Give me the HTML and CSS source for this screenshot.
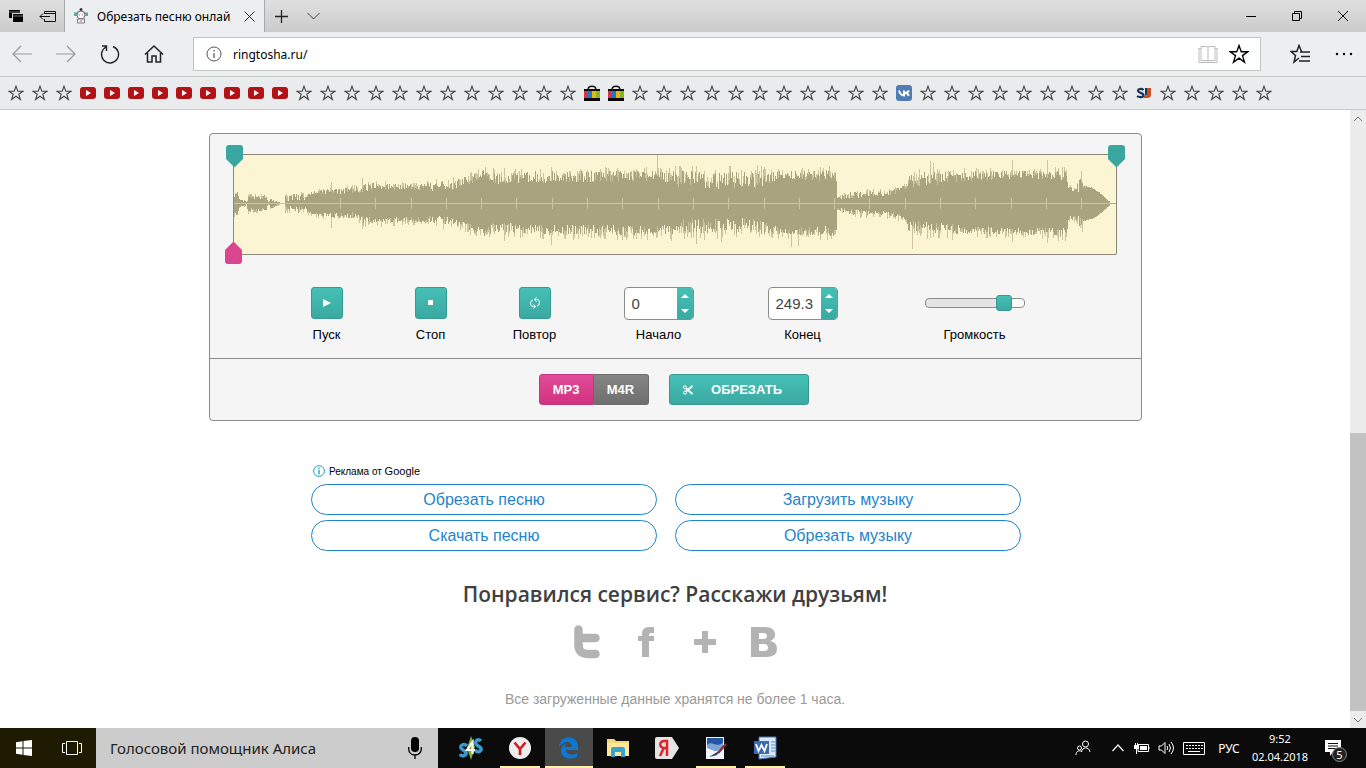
FILE: index.html
```html
<!DOCTYPE html>
<html lang="ru">
<head>
    <meta charset="UTF-8">
    <meta name="viewport" content="width=device-width, initial-scale=1.0">
    <title>Обрезать песню онлайн</title>
    <link rel="stylesheet" href="styles.css">
</head>
<body>
<svg class="symbols" aria-hidden="true">
    <symbol id="star" viewBox="0 0 16 16">
        <path d="M8 1.2L9.8 6.2H15L10.8 9.3L12.4 14.5L8 11.3L3.6 14.5L5.2 9.3L1 6.2H6.2Z" fill="none" stroke="currentColor" stroke-width="1.1"/>
    </symbol>
    <symbol id="video" viewBox="0 0 16 16">
        <rect y="2" width="16" height="12" rx="3" fill="#b31217"/>
        <path d="M6 5L11 8L6 11Z" fill="#fff"/>
    </symbol>
    <symbol id="bag" viewBox="0 0 16 16">
        <path d="M4 5C4 0 12 0 12 5" fill="none" stroke="#111" stroke-width="1.4"/>
        <path d="M0 4H16V16H0Z" fill="#080808"/>
        <path d="M0 6H4V13H0Z" fill="#d8334a"/>
        <path d="M4 6H8V13H4Z" fill="#2276c9"/>
        <path d="M8 6H12V13H8Z" fill="#e6b70e"/>
        <path d="M12 6H16V13H12Z" fill="#86b52b"/>
    </symbol>
    <symbol id="vk" viewBox="0 0 16 16">
        <rect width="16" height="16" rx="3" fill="#4f7db3"/>
        <path d="M3 5.500C4 9 5.500 10.500 8 10.500V5.500M13 5.500C12 7.500 10.500 8 8.500 8C10.500 8 12 9 13 10.700" fill="none" stroke="#fff" stroke-width="1.900"/>
    </symbol>
    <symbol id="sj" viewBox="0 0 16 16">
        <path d="M7.500 5C6 3.500 2 3.500 2 5.800C2 8 7.500 7.800 7.500 10.200C7.500 12.500 3 12.500 1 11.200" fill="none" stroke="#16365f" stroke-width="2.200"/>
        <path d="M9 3H15V10Q15 13 11 13H8V10.500H10Q11 10.500 11 9V5H9Z" fill="#c8501e"/>
        <path d="M9 3H11V9Q11 10.500 9 10.500Z" fill="#16365f"/>
    </symbol>
</svg>

<header class="browser">
    <div class="tabs">
        <button class="tab-tool" aria-label="Отложенные вкладки">
            <svg width="16" height="16" viewBox="0 0 16 16"><path d="M1 2H12V5H4V10H1Z"/><path d="M5 6H15V14H5Z"/><path d="M1 4H12M5 8H15" stroke="#c4c6c8" stroke-width=".6"/></svg>
        </button>
        <button class="tab-tool" aria-label="Отложить вкладки">
            <svg width="18" height="14" viewBox="0 0 18 14"><path d="M5.500 5V2.500H16.500V12.500H5.500V10M5 4.500H16M1 7.500H11M4 4.500L1 7.500L4 10.500" fill="none" stroke="#111"/></svg>
        </button>
        <div class="tab">
            <svg width="16" height="16" viewBox="0 0 16 16"><circle cx="8" cy="1.500" r="1.500" fill="#333"/><path d="M3 7C3 1.500 13 1.500 13 7Z" fill="#3e4a4c"/><circle cx="8" cy="7" r="4" fill="#fff" stroke="#667"/><path d="M1 4.500H4V8H1ZM12 4.500H15V8H12Z" fill="#56aaa4"/><path d="M4.500 11H11.500V15H4.500Z" fill="#fff" stroke="#777"/><path d="M6 7H7M9 7H10M6.500 13H9.500" stroke="#c55"/></svg>
            <span class="tab-title">Обрезать песню онлай</span>
            <button class="tab-close" aria-label="Закрыть вкладку">
                <svg width="11" height="11" viewBox="0 0 11 11"><path d="M.5.5L10.500 10.500M10.500.5L.5 10.500" stroke="#333"/></svg>
            </button>
        </div>
        <button class="tab-tool" aria-label="Новая вкладка">
            <svg width="13" height="13" viewBox="0 0 13 13"><path d="M6.500 0V13M0 6.500H13" stroke="#222" stroke-width="1.300"/></svg>
        </button>
        <button class="tab-tool" aria-label="Список вкладок">
            <svg width="13" height="8" viewBox="0 0 13 8"><path d="M.5 1L6.500 7L12.500 1" fill="none" stroke="#444"/></svg>
        </button>
        <div class="window-buttons">
            <button aria-label="Свернуть"><svg width="10" height="10" viewBox="0 0 10 10"><path d="M0 5.500H10" stroke="#000"/></svg></button>
            <button aria-label="Развернуть"><svg width="10" height="10" viewBox="0 0 10 10"><path d="M.5 2.500H7.500V9.500H.5ZM2.500 2.500V.5H9.500V7.500H7.500" fill="none" stroke="#000"/></svg></button>
            <button aria-label="Закрыть"><svg width="10" height="10" viewBox="0 0 10 10"><path d="M0 0L10 10M10 0L0 10" stroke="#000"/></svg></button>
        </div>
    </div>
    <div class="toolbar">
        <button class="nav disabled" aria-label="Назад"><svg width="20" height="18" viewBox="0 0 20 18"><path d="M9 1L1 9L9 17M1 9H20" fill="none" stroke="currentColor" stroke-width="1.200"/></svg></button>
        <button class="nav disabled" aria-label="Вперёд"><svg width="20" height="18" viewBox="0 0 20 18"><path d="M11 1L19 9L11 17M19 9H0" fill="none" stroke="currentColor" stroke-width="1.200"/></svg></button>
        <button class="nav" aria-label="Обновить"><svg width="20" height="20" viewBox="0 0 20 20"><path d="M6 3A8.500 8.500 0 1 0 13 2.500M6.500 7V2H2" fill="none" stroke="currentColor" stroke-width="1.400"/></svg></button>
        <button class="nav" aria-label="Домой"><svg width="20" height="20" viewBox="0 0 20 20"><path d="M1 10.500L10 2L19 10.500M3.500 9V18H8V12H12V18H16.500V9" fill="none" stroke="currentColor" stroke-width="1.500"/></svg></button>
        <div class="address">
            <svg width="16" height="16" viewBox="0 0 16 16"><circle cx="8" cy="8" r="7" fill="none" stroke="#555"/><path d="M8 7V12M8 4V5.500" stroke="#333"/></svg>
            <input type="text" value="ringtosha.ru/" aria-label="Адрес">
            <button class="icon-button" aria-label="Режим чтения"><svg width="20" height="18" viewBox="0 0 20 18"><path d="M10 2.500Q10 1.500 8 1.500H3V15.500H8Q10 15.500 10 16.500Q10 15.500 12 15.500H17V1.500H12Q10 1.500 10 2.500V16M3 3.500H1V17.500H19V3.500H17" fill="none" stroke="#bbb"/></svg></button>
            <button class="icon-button" aria-label="В избранное"><svg class="big-star"><use href="#star"/></svg></button>
        </div>
        <button class="nav hub" aria-label="Центр"><svg width="20" height="20" viewBox="0 0 20 20"><path d="M11.500 7.500L9 1.500L6.800 7.500H1L5.500 11.500L4 18L9 14M10 8H20M11 12.500H20M9 17H20" fill="none" stroke="currentColor" stroke-width="1.500"/></svg></button>
        <button class="nav" aria-label="Дополнительно"><svg width="18" height="4" viewBox="0 0 18 4"><circle cx="2" cy="2" r="1.200"/><circle cx="9" cy="2" r="1.200"/><circle cx="16" cy="2" r="1.200"/></svg></button>
    </div>
    <nav class="favorites" id="favorites" aria-label="Избранное"></nav>
</header>

<div class="viewport">
    <main class="page">
        <section class="editor">
            <div class="editor-top">
                <div class="wave">
                    <svg class="wave-image" id="wave" viewBox="0 0 882 99" preserveAspectRatio="none">
                        <path id="peaks" class="peaks"/>
                        <path id="body" class="body"/>
                        <path d="M0 48.500H882" class="axis-dark"/>
                        <path id="axis" class="axis"/>
                    </svg>
                    <svg class="marker marker-start" viewBox="0 0 17 22"><path d="M3 0H14Q17 0 17 3V14L9 22H8L0 14V3Q0 0 3 0Z" fill="#3aa6a0"/></svg>
                    <svg class="marker marker-end" viewBox="0 0 17 22"><path d="M3 0H14Q17 0 17 3V14L9 22H8L0 14V3Q0 0 3 0Z" fill="#3aa6a0"/></svg>
                    <svg class="marker marker-play" viewBox="0 0 17 22"><path d="M3 22H14Q17 22 17 19V8L9 0H8L0 8V19Q0 22 3 22Z" fill="#d9468f"/></svg>
                </div>
                <div class="controls">
                    <div class="control">
                        <button class="square" id="play" aria-labelledby="play-label"><svg width="8" height="8" viewBox="0 0 8 8"><path d="M0 0L8 4L0 8Z" fill="#fff"/></svg></button>
                        <label id="play-label" for="play">Пуск</label>
                    </div>
                    <div class="control">
                        <button class="square" id="stop" aria-labelledby="stop-label"><svg width="6" height="6" viewBox="0 0 6 6"><path d="M0 0H5V5H0Z" fill="#fff"/></svg></button>
                        <label id="stop-label" for="stop">Стоп</label>
                    </div>
                    <div class="control">
                        <button class="square" id="repeat" aria-labelledby="repeat-label"><svg width="10" height="12" viewBox="0 0 10 12"><path d="M5 9.500H3Q.7 9.500.7 7.500V5.500Q.7 3.500 3 3M5 2.500H7Q9.300 2.500 9.300 4.500V6.500Q9.300 8.500 7 9M6.500.3L4.500 2.500L6.500 4.700M3.500 7.300L5.500 9.500L3.500 11.700" fill="none" stroke="#fff"/></svg></button>
                        <label id="repeat-label" for="repeat">Повтор</label>
                    </div>
                    <div class="control control-number">
                        <div class="spinner">
                            <input type="text" id="start" value="0">
                            <div class="arrows">
                                <button aria-label="Начало больше"><svg width="8" height="4" viewBox="0 0 8 4"><path d="M0 4L4 0L8 4Z" fill="#fff"/></svg></button>
                                <button aria-label="Начало меньше"><svg width="8" height="4" viewBox="0 0 8 4"><path d="M0 0L4 4L8 0Z" fill="#fff"/></svg></button>
                            </div>
                        </div>
                        <label for="start">Начало</label>
                    </div>
                    <div class="control control-number">
                        <div class="spinner">
                            <input type="text" id="end" value="249.3">
                            <div class="arrows">
                                <button aria-label="Конец больше"><svg width="8" height="4" viewBox="0 0 8 4"><path d="M0 4L4 0L8 4Z" fill="#fff"/></svg></button>
                                <button aria-label="Конец меньше"><svg width="8" height="4" viewBox="0 0 8 4"><path d="M0 0L4 4L8 0Z" fill="#fff"/></svg></button>
                            </div>
                        </div>
                        <label for="end">Конец</label>
                    </div>
                    <div class="control control-volume">
                        <input type="range" id="volume" min="0" max="100" value="86">
                        <label for="volume">Громкость</label>
                    </div>
                </div>
            </div>
            <div class="editor-bottom">
                <div class="formats">
                    <button class="format active">MP3</button>
                    <button class="format">M4R</button>
                </div>
                <button class="cut">
                    <svg width="10" height="10" viewBox="0 0 10 10"><path d="M3 3.500L9.500 9M3 6.500L9.500 1" stroke="#fff" stroke-width="1.800"/><circle cx="2" cy="2.300" r="1.500" fill="none" stroke="#fff"/><circle cx="2" cy="7.700" r="1.500" fill="none" stroke="#fff"/></svg>
                    <span>ОБРЕЗАТЬ</span>
                </button>
            </div>
        </section>

        <section class="ads">
            <div class="ads-title">
                <svg width="12" height="12" viewBox="0 0 12 12"><circle cx="6" cy="6" r="5.400" fill="none" stroke="#21a5c4"/><path d="M6 5V9.500M6 2.500V4" stroke="#21a5c4" stroke-width="1.400"/></svg>
                <span>Реклама от <b>Google</b></span>
            </div>
            <div class="ads-links">
                <a href="#">Обрезать песню</a>
                <a href="#">Загрузить музыку</a>
                <a href="#">Скачать песню</a>
                <a href="#">Обрезать музыку</a>
            </div>
        </section>

        <h2>Понравился сервис? Расскажи друзьям!</h2>
        <div class="social">
            <a href="#" aria-label="Twitter"><svg width="26" height="34" viewBox="0 0 26 34"><path d="M4.500 4.500V20Q4.500 29 14 29H21.500M4.500 13H21.500" fill="none" stroke="#b3b3b3" stroke-width="8.500" stroke-linecap="round"/></svg></a>
            <a href="#" aria-label="Facebook"><svg width="18" height="32" viewBox="0 0 18 32"><path d="M17 1V7H14Q12 7 12 10H17V15H12V31H5V15H1V10H5V8Q5 1 12 1Z" fill="#b3b3b3"/></svg></a>
            <a href="#" aria-label="Google Plus"><svg width="22" height="22" viewBox="0 0 22 22"><path d="M8 0H14V8H22V14H14V22H8V14H0V8H8Z" fill="#b3b3b3"/></svg></a>
            <a href="#" aria-label="ВКонтакте"><svg width="26" height="30" viewBox="0 0 26 30"><path fill-rule="evenodd" d="M0 0H14Q24 0 24 8Q24 12 19 14Q26 15 26 22Q26 30 15 30H0ZM8 6V12H12Q16 12 16 9Q16 6 12 6ZM8 17V24H13Q17 24 17 21Q17 17 13 17Z" fill="#b3b3b3"/></svg></a>
        </div>
        <p class="note">Все загруженные данные хранятся не более 1 часа.</p>
    </main>
    <div class="scrollbar">
        <svg width="16" height="17" viewBox="0 0 16 17"><path d="M4 11L8 7L12 11" fill="none" stroke="#777"/></svg>
        <div class="scroll-space"></div>
        <div class="scroll-thumb"></div>
        <svg width="16" height="17" viewBox="0 0 16 17"><path d="M4 7L8 11L12 7" fill="none" stroke="#777"/></svg>
    </div>
</div>

<footer class="taskbar">
    <div class="start">
        <button aria-label="Пуск Windows"><svg width="16" height="16" viewBox="0 0 16 16"><path d="M0 2.200L6.500 1.300V7.500H0ZM7.500 1.100L16 0V7.500H7.500ZM0 8.500H6.500V14.700L0 13.800ZM7.500 8.500H16V16L7.500 14.900Z" fill="#fff"/></svg></button>
        <button aria-label="Представление задач"><svg width="20" height="16" viewBox="0 0 20 16"><path d="M4.500 1.500H15.500V14.500H4.500ZM3 3.500H.5V12.500H3M17 3.500H19.500V12.500H17" fill="none" stroke="#fff"/></svg></button>
    </div>
    <div class="search">
        <input type="text" value="Голосовой помощник Алиса" aria-label="Поиск">
        <button aria-label="Микрофон"><svg width="14" height="22" viewBox="0 0 14 22"><rect x="3" width="8" height="15" rx="4"/><path d="M.7 10V12C.7 20 13.300 20 13.300 12V10M7 18V22" fill="none" stroke="#000" stroke-width="1.300"/></svg></button>
    </div>
    <div class="apps">
        <button aria-label="S4S"><svg width="24" height="24" viewBox="0 0 24 24"><path d="M12 0L16 11L12 24L8 12Z" fill="#76b53a"/><path d="M8 10C5 7 1 9 2 12C3 15 8 14 7 18C5 21 2 20 1 18M22 5C19 2 16 5 17 8C18 11 23 10 22 14C20 17 18 16 16 14" fill="none" stroke="#3c98cf" stroke-width="3.500"/><path d="M13.500 18V6L8 14H16" fill="none" stroke="#fff" stroke-width="2.200"/></svg></button>
        <button class="open" aria-label="Яндекс Браузер"><svg width="22" height="22" viewBox="0 0 22 22"><circle cx="11" cy="11" r="11" fill="#eee"/><path d="M5.500 5.500L11 12L16.500 5.500M11 11V18" fill="none" stroke="#d11b22" stroke-width="2.600"/></svg></button>
        <button class="open current" aria-label="Edge"><svg width="20" height="22" viewBox="0 0 20 22"><path d="M0 10C2-4 20-2 19 11V13H7C7 18 14 19 18 16V20C10 24 2 20 2 14C2 10 5 7 8 6C6 7 6 9 6 10H13C13 3 4 4 0 10Z" fill="#0c78d4"/></svg></button>
        <button aria-label="Проводник"><svg width="22" height="20" viewBox="0 0 22 20"><path d="M0 1H7L9 3H22V18H0Z" fill="#f3d77b"/><path d="M2 5H22V18H0V4Z" fill="#ffe79b"/><path d="M4 11Q4 9 6 9H16Q18 9 18 11V19H14V14H8V19H4Z" fill="#35a5cf"/></svg></button>
        <button aria-label="Яндекс"><svg width="24" height="24" viewBox="0 0 24 24"><path d="M2 1H17L24 12L17 23H2Q0 23 0 21V3Q0 1 2 1Z" fill="#e4e4e4"/><path d="M12 20V5H9.500C4 5 4 12 9 12H12M8.500 12.500L5 20" fill="none" stroke="#e2232a" stroke-width="2.500"/></svg></button>
        <button class="open" aria-label="Paint"><svg width="22" height="24" viewBox="0 0 22 24"><path d="M1 1H19V23H1Z" fill="#f2f5fa"/><path d="M2 2H18V13L10 15L2 11Z" fill="#2456a5"/><path d="M2 9C7 4 10 12 18 7V13L10 15L2 12Z" fill="#7ca5d8"/><path d="M21 8L13 17" stroke="#862b36" stroke-width="2.500"/><path d="M14 15L4 21L12 19Z" fill="#24355c"/></svg></button>
        <button class="open" aria-label="Word"><svg width="24" height="24" viewBox="0 0 24 24"><path d="M6 1H23V21L6 23Z" fill="#dce8f7" stroke="#4576b7"/><path d="M1 5H16V18H1Z" fill="#3b6cb2"/><path d="M3 8L5.500 15L8.500 9L11.500 15L14 8" fill="none" stroke="#fff" stroke-width="1.800"/><path d="M18 6H22M18 9H22M18 12H22M18 15H22M8 20H21" stroke="#5c8bc6"/></svg></button>
    </div>
    <div class="tray">
        <button aria-label="Люди"><svg width="16" height="16" viewBox="0 0 16 16"><circle cx="10.500" cy="4" r="3" fill="none" stroke="#fff"/><circle cx="4.500" cy="8" r="2" fill="none" stroke="#fff"/><path d="M1 15C1 11 4 10 6.500 11.500M6.500 12C7 7 14 6 15 12" fill="none" stroke="#fff"/></svg></button>
        <button aria-label="Скрытые значки"><svg width="12" height="8" viewBox="0 0 12 8"><path d="M.5 7L6 1L11.500 7" fill="none" stroke="#fff" stroke-width="1.200"/></svg></button>
        <button aria-label="Батарея"><svg width="16" height="14" viewBox="0 0 16 14"><path d="M4 3.500H14.500V10.500H4ZM15 6V8" fill="none" stroke="#fff"/><path d="M6 5H13V9H6ZM0 4H5V8H3V13H2V8H0ZM1 2H2V4H1ZM3 2H4V4H3Z" fill="#fff"/></svg></button>
        <button aria-label="Звук"><svg width="17" height="14" viewBox="0 0 17 14"><path d="M1 5H3.500L7 1.500V12.500L3.500 9H1ZM9 5Q10.500 7 9 9M11 3Q14 7 11 11M13 1Q18 7 13 13" fill="none" stroke="#fff"/></svg></button>
        <button class="keyboard" aria-label="Клавиатура"><svg width="22" height="13" viewBox="0 0 22 13"><path d="M.5.5H21.500V12.500H.5Z" fill="none" stroke="#fff"/><path d="M3 3.500H20M3 6.500H20" stroke="#fff" stroke-dasharray="2 1"/><path d="M5 9.500H17" stroke="#fff"/></svg></button>
        <button class="lang">РУС</button>
        <button class="clock"><time>9:52</time><span>02.04.2018</span></button>
        <button class="notices" aria-label="Уведомления"><svg width="16" height="16" viewBox="0 0 16 16"><path d="M0 0H16V12H8L5 16V12H0Z" fill="#fff"/><path d="M3 3.500H13M3 6H13M3 8.500H13" stroke="#111"/></svg><span class="badge">5</span></button>
    </div>
</footer>
<script src="script.js"></script>
</body>
</html>
```
FILE: styles.css
```css
* {
    box-sizing: border-box;
}

body {
    margin: 0;
    height: 100vh;
    display: flex;
    flex-direction: column;
    overflow: hidden;
    font-family: "Liberation Sans", Arial, sans-serif;
    font-size: 13px;
    background: #fff;
}

button {
    display: flex;
    align-items: center;
    justify-content: center;
    padding: 0;
    border: 0;
    background: none;
    font-family: inherit;
    color: inherit;
}

input {
    min-width: 0;
    padding: 0;
    border: 0;
    background: none;
    font-family: inherit;
}

svg {
    flex-shrink: 0;
}

.symbols {
    position: absolute;
    width: 0;
    height: 0;
}

/* browser */
.browser {
    font-family: "Noto Sans", sans-serif;
    background: #eceeef;
}

.tabs {
    display: flex;
    height: 32px;
    background: linear-gradient(#dfdfdf, #cbcbcb);
}

.tab-tool {
    width: 32px;
}

.tab {
    display: flex;
    align-items: center;
    width: 201px;
    padding: 0 7px 0 8px;
    gap: 8px;
    background: #eceeef;
    border: solid #a9a9a9;
    border-width: 0 1px;
}

.tab-title {
    flex: 1;
    font-size: 12px;
    white-space: nowrap;
    overflow: hidden;
}

.tab-close {
    width: 16px;
}

.window-buttons {
    display: flex;
    margin-left: auto;
}

.window-buttons button {
    width: 46px;
}

.toolbar {
    display: flex;
    align-items: center;
    height: 45px;
    border-bottom: 1px solid #c6cdc8;
}

.nav {
    width: 44px;
    height: 44px;
    color: #222;
}

.disabled {
    color: #999;
}

.address {
    flex: 1;
    display: flex;
    align-items: center;
    gap: 11px;
    height: 34px;
    margin: 0 17px;
    padding: 0 11px 0 12px;
    background: #fff;
    border: 1px solid #bfc5c2;
}

.address input {
    flex: 1;
    font-size: 12px;
}

.big-star {
    width: 20px;
    height: 20px;
}

.favorites {
    display: flex;
    align-items: center;
    gap: 8px;
    height: 33px;
    padding: 0 8px;
    background: #e9ebec;
    border-bottom: 1px solid #c6cdc8;
}

.favorites a {
    display: flex;
    color: #444;
}

.favorites svg {
    width: 16px;
    height: 16px;
}

/* page */
.viewport {
    flex: 1;
    display: flex;
    min-height: 0;
}

.page {
    flex: 1;
    display: flex;
    flex-direction: column;
    align-items: center;
    padding-top: 23px;
    overflow: hidden;
}

.editor {
    width: 100%;
    max-width: 933px;
    border: 1px solid #8c8c88;
    border-radius: 4px;
    background: #f5f5f5;
}

.editor-top {
    padding: 20px 24px 15px 23px;
    border-bottom: 1px solid #8c8c88;
}

.wave {
    position: relative;
    height: 101px;
    border: 1px solid #8c877a;
    border-radius: 2px;
    background: #fbf5d3;
}

.wave-image {
    display: block;
    width: 100%;
    height: 99px;
    shape-rendering: crispEdges;
}

.peaks {
    stroke: #cbc49c;
}

.body {
    stroke: #aaa37f;
}

.axis-dark {
    stroke: #b5ad82;
}

.axis {
    stroke: #cdc69b;
}

.marker {
    position: absolute;
    width: 17px;
    height: 22px;
}

.marker-start {
    top: -10px;
    left: -8px;
}

.marker-end {
    top: -10px;
    right: -9px;
}

.marker-play {
    bottom: -10px;
    left: -9px;
}

.controls {
    display: flex;
    justify-content: center;
    margin-top: 32px;
}

.control {
    display: flex;
    flex-direction: column;
    align-items: center;
    gap: 7px;
    width: 104px;
}

.control-number {
    width: 144px;
}

.control-volume {
    width: 200px;
}

.control label {
    line-height: 16px;
}

.square {
    width: 32px;
    height: 32px;
    margin-bottom: 1px;
    border: 1px solid #379a92;
    border-radius: 3px;
    background: linear-gradient(#46c0b6, #3aa9a2);
}

.spinner {
    display: flex;
    width: 70px;
    height: 33px;
    border: 1px solid #8c8c88;
    border-radius: 4px;
    background: #fff;
    overflow: hidden;
}

.spinner input {
    flex: 1;
    padding-left: 7px;
    font-size: 15px;
    color: #444;
}

.arrows {
    display: flex;
    flex-direction: column;
    width: 16px;
    background: linear-gradient(#46c0b6, #3aa9a2);
}

.arrows button {
    flex: 1;
}

#volume {
    appearance: none;
    width: 100px;
    height: 10px;
    margin: 11px 0 12px;
    border: 1px solid #8c8c88;
    border-radius: 4px;
    background: linear-gradient(90deg, #e4e4e4 80%, #fff 80%);
}

#volume::-webkit-slider-thumb {
    appearance: none;
    width: 16px;
    height: 16px;
    border: 1px solid #379a92;
    border-radius: 3px;
    background: linear-gradient(#46c0b6, #3aa9a2);
}

.editor-bottom {
    display: flex;
    justify-content: center;
    gap: 20px;
    padding: 15px 3px 15px 0;
}

.formats {
    display: flex;
}

.format {
    width: 55px;
    height: 31px;
    border: 1px solid #6c6c6c;
    border-left: 0;
    border-radius: 0 3px 3px 0;
    background: linear-gradient(#858585, #6f6f6f);
    font-size: 13px;
    font-weight: bold;
    color: #fff;
}

.format.active {
    border: 1px solid #c13a80;
    border-radius: 3px 0 0 3px;
    background: linear-gradient(#e04c98, #d23180);
}

.cut {
    width: 140px;
    height: 31px;
    padding-right: 12px;
    gap: 18px;
    border: 1px solid #379a92;
    border-radius: 3px;
    background: linear-gradient(#46c0b6, #3aa9a2);
    font-size: 13px;
    font-weight: bold;
    color: #fff;
}

.ads {
    width: 100%;
    max-width: 728px;
    margin-top: 42px;
}

.ads-title {
    display: flex;
    align-items: center;
    gap: 4px;
    height: 16px;
    margin-bottom: 5px;
    padding-left: 2px;
    font-size: 10px;
}

.ads-title b {
    font-size: 11px;
    font-weight: normal;
}

.ads-links {
    display: grid;
    grid-template-columns: 1fr 1fr;
    gap: 5px 18px;
    padding-right: 18px;
}

.ads-links a {
    height: 31px;
    border: 1px solid #1f84cc;
    border-radius: 16px;
    font-size: 16px;
    line-height: 29px;
    text-align: center;
    text-decoration: none;
    color: #1f84cc;
}

h2 {
    margin: 29px 0 0;
    font-family: "Open Sans", sans-serif;
    font-size: 21px;
    font-weight: 600;
    line-height: 28px;
    color: #404040;
}

.social {
    display: flex;
    align-items: center;
    height: 36px;
    margin-top: 16px;
}

.social a {
    display: flex;
    justify-content: center;
    width: 59px;
}

.note {
    margin: 30px 0 0;
    font-size: 14px;
    line-height: 18px;
    color: #999;
}

.scrollbar {
    display: flex;
    flex-direction: column;
    width: 16px;
    background: #ececec;
}

.scroll-space {
    flex: 306;
}

.scroll-thumb {
    flex: 278;
    background: #c2c2c2;
}

/* taskbar */
.taskbar {
    display: flex;
    height: 40px;
    background: #0b0b0b;
    font-family: "Noto Sans", sans-serif;
    color: #fff;
}

.start {
    display: flex;
    width: 96px;
    background: #1f1a02;
}

.start button {
    width: 48px;
}

.search {
    display: flex;
    width: 342px;
    padding: 0 16px 0 14px;
    background: #ccc;
}

.search input {
    flex: 1;
    font-size: 15px;
    color: #222;
}

.apps {
    display: flex;
    gap: 1px;
    padding-left: 9px;
}

.apps button {
    width: 48px;
    position: relative;
}

.apps .open::after {
    content: "";
    position: absolute;
    right: 4px;
    bottom: 0;
    left: 4px;
    height: 2px;
    background: #fff0a8;
}

.apps .current {
    background: #4a4a4a;
}

.apps .current::after {
    right: 0;
    left: 0;
}

.tray {
    display: flex;
    margin-left: auto;
    font-size: 11px;
}

.tray button {
    width: 24px;
}

.tray button:first-child {
    width: 47px;
}

.tray .keyboard {
    width: 32px;
}

.tray .lang {
    width: 38px;
    font-size: 12px;
}

.tray .clock {
    flex-direction: column;
    width: 64px;
    font-size: 11px;
    line-height: 18px;
}

.tray .notices {
    position: relative;
    width: 54px;
    padding-right: 12px;
}

.badge {
    position: absolute;
    top: 19px;
    left: 20px;
    width: 15px;
    height: 15px;
    border: 1px solid #888;
    border-radius: 50%;
    background: #222;
    font-size: 11px;
    line-height: 13px;
}
```
FILE: script.js
```js
// [icon, how many in a row]
const favorites = [
    ['star', 3], ['video', 9], ['star', 12], ['bag', 2], ['star', 11],
    ['vk', 1], ['star', 9], ['sj', 1], ['star', 5]
];

document.getElementById('favorites').innerHTML = favorites.map(([icon, count]) =>
    `<a href="#" aria-label="${icon}"><svg><use href="#${icon}"/></svg></a>`.repeat(count)
).join('');

// [x, body height, peak height]
const levels = [
    [0, 6, 14], [3, 10, 12], [5, 3, 5], [12, 0, 3], [14, 4, 10], [32, 4, 9], [34, 0, 1],
    [36, 2, 6], [44, 0, 2], [46, 0, 0], [50, 0, 0], [51, 1, 10], [65, 3, 13], [72, 2, 9], [77, 8, 14],
    [95, 9, 16], [120, 8, 19], [130, 11, 24], [160, 13, 22], [190, 13, 22],
    [205, 10, 25], [225, 15, 27], [238, 20, 33], [250, 26, 36], [260, 17, 35],
    [300, 20, 36], [400, 21, 37], [425, 22, 36], [450, 14, 38], [520, 14, 38],
    [550, 24, 35], [580, 22, 37], [602, 22, 38], [603, 4, 7], [615, 4, 14],
    [658, 8, 15], [672, 13, 20], [674, 16, 33], [700, 17, 37], [730, 22, 35],
    [790, 24, 35], [832, 23, 37], [835, 11, 18], [844, 11, 22], [845, 13, 33],
    [848, 13, 33], [849, 15, 18], [857, 15, 16], [865, 10, 11], [876, 0, 1], [882, 0, 0]
];

// single tall lines: x -> [up, down]
const spikes = {97: [21, 24], 128: [25, 25], 270: [35, 37], 317: [36, 41], 423: [48, 33],
    462: [37, 40], 557: [26, 43], 564: [26, 42], 678: [20, 45], 696: [42, 34], 699: [40, 33],
    778: [43, 38], 813: [43, 39]};

let seed = 11;
function random() {
    seed = (seed * 16807) % 2147483647;
    return seed / 2147483647;
}

function levelAt(x, k) {
    const i = levels.findIndex(level => level[0] > x);
    const a = levels[i - 1];
    const b = levels[i];
    return a[k] + (b[k] - a[k]) * (x - a[0]) / (b[0] - a[0]);
}

let body = '';
let peaks = '';
for (let x = 0; x < 882; x++) {
    const low = levelAt(x, 1);
    const high = levelAt(x, 2);
    if (high < 1) continue;
    const up = low + (high - low) * random() * 0.75;
    const down = low + (high - low) * random() * 0.65;
    body += `M${x + 0.5} ${Math.round(48 - up)}V${Math.round(49 + down)}`;
    const spike = spikes[x];
    if (spike) {
        peaks += `M${x + 0.5} ${48 - spike[0]}V${49 + spike[1]}`;
    } else if (random() < 0.6) {
        const top = low + (high - low) * random();
        const bottom = low + (high - low) * random();
        peaks += `M${x + 0.5} ${Math.round(48 - top)}V${Math.round(49 + bottom)}`;
    }
}
document.getElementById('body').setAttribute('d', body);
document.getElementById('peaks').setAttribute('d', peaks);

let axis = 'M0 48.5H876';
for (let i = 3; i < 25; i++) {
    axis += `M${Math.round(i * 35.3) + 0.5} 43V54`;
}
document.getElementById('axis').setAttribute('d', axis);
```
